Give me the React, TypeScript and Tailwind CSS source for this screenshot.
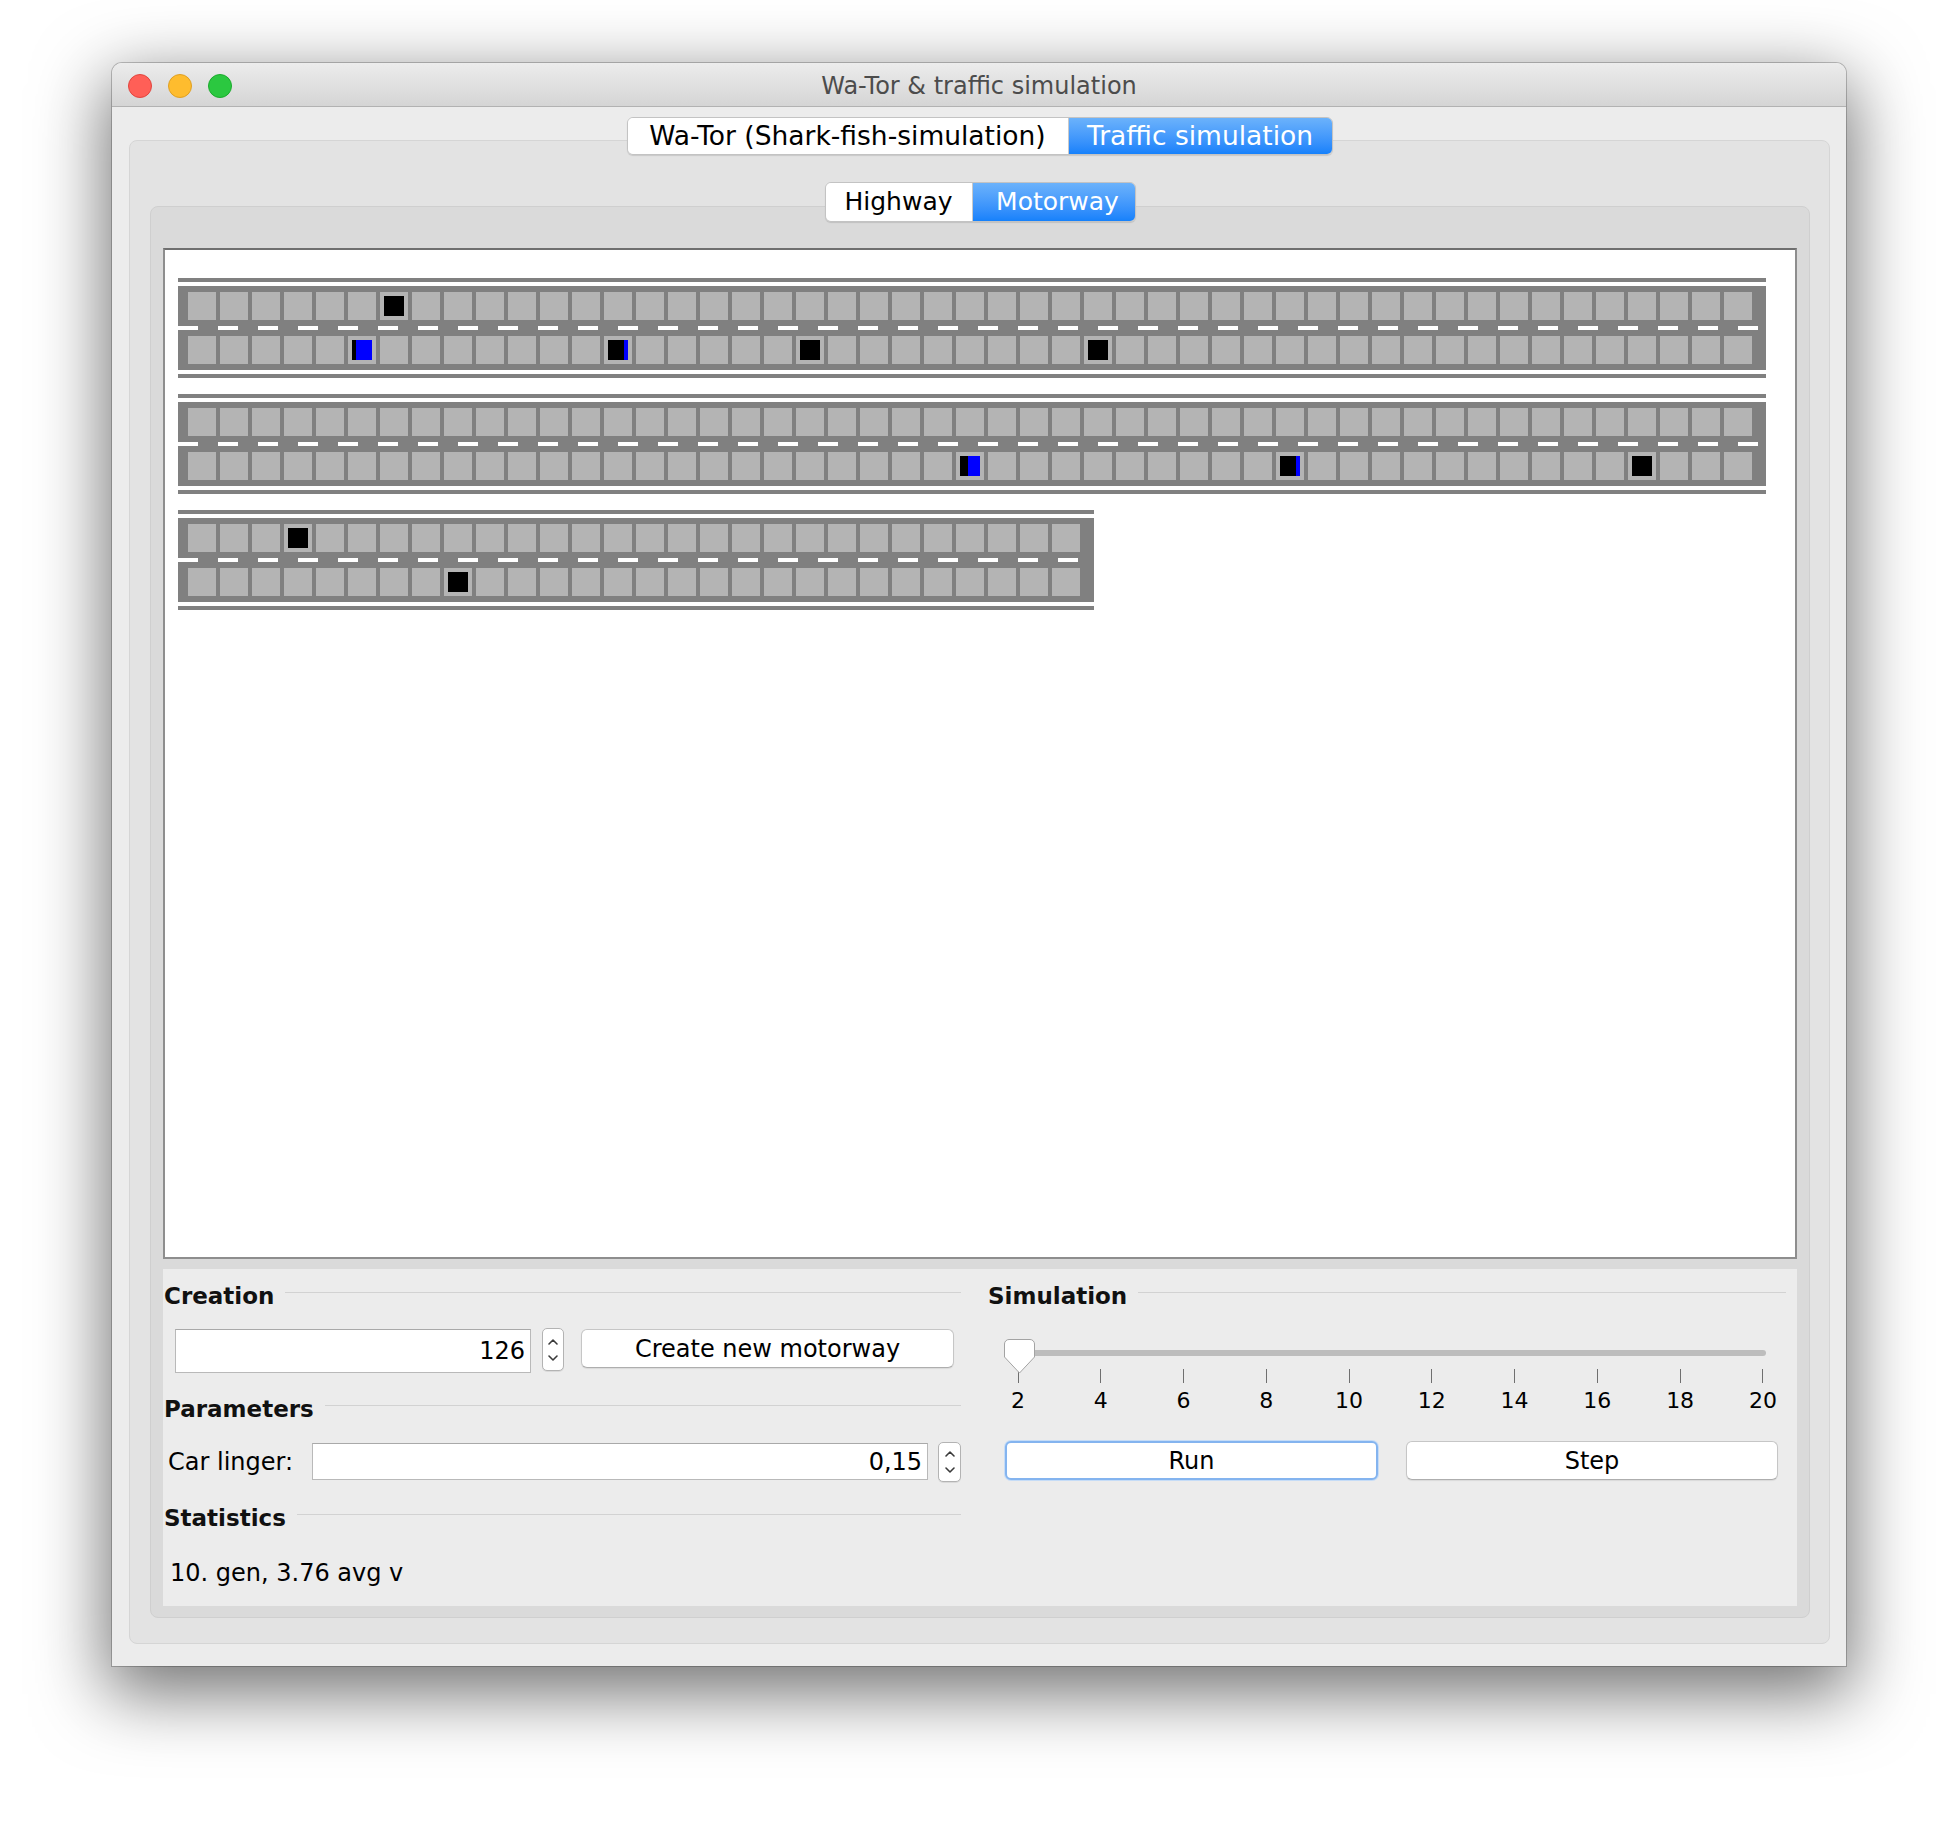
import type { ReactNode } from "react";

type Car = [number, number]; // [black px, blue px]
type Lane = Record<number, Car>;
type Road = { cells: number; lanes: [Lane, Lane] };

const roads: Road[] = [
  {
    cells: 49,
    lanes: [{ 6: [20, 0] }, { 5: [4, 16], 13: [16, 4], 19: [20, 0], 28: [20, 0] }],
  },
  {
    cells: 49,
    lanes: [{}, { 24: [8, 12], 34: [16, 4], 45: [20, 0] }],
  },
  {
    cells: 28,
    lanes: [{ 3: [20, 0] }, { 8: [20, 0] }],
  },
];

const ticks = [2, 4, 6, 8, 10, 12, 14, 16, 18, 20];

function LaneRow({ cells, cars }: { cells: number; cars: Lane }) {
  return (
    <div className="flex gap-1 pl-[10px] pr-[14px]">
      {Array.from({ length: cells }, (_, i) => {
        const car = cars[i];
        return (
          <div key={i} className="h-7 w-7 bg-[#b4b4b4] p-1">
            {car ? (
              <div className="flex h-5 w-5">
                <div className="h-5 bg-black" style={{ width: car[0] }} />
                <div className="h-5 bg-[#0000ff]" style={{ width: car[1] }} />
              </div>
            ) : null}
          </div>
        );
      })}
    </div>
  );
}

function RoadView({ road }: { road: Road }) {
  return (
    <div className="w-fit">
      <div className="h-1 bg-[#808080]" />
      <div className="mt-1 bg-[#808080] py-[6px]">
        <LaneRow cells={road.cells} cars={road.lanes[0]} />
        <div className="my-[6px] h-1 bg-[repeating-linear-gradient(90deg,#ffffff_0px,#ffffff_20px,transparent_20px,transparent_40px)]" />
        <LaneRow cells={road.cells} cars={road.lanes[1]} />
      </div>
      <div className="mt-1 h-1 bg-[#808080]" />
    </div>
  );
}

function Heading({ children }: { children: ReactNode }) {
  return (
    <div className="flex h-[28px] items-start">
      <span className="text-[23px] font-bold leading-[28px] text-[#111]">{children}</span>
      <div className="ml-[11px] mt-[10px] h-px flex-1 bg-[#d2d2d2]" />
    </div>
  );
}

function Spinner({ className }: { className: string }) {
  return (
    <div
      className={`flex items-center justify-center rounded-[5px] border border-[#b3b3b3] bg-white shadow-[0_1px_0_rgba(0,0,0,0.08)] ${className}`}
    >
      <svg width="20" height="26" viewBox="0 0 20 26" fill="none">
        <path d="M6 7 L10 3 L14 7" stroke="#3a3a3a" strokeWidth="1.6" strokeLinecap="round" strokeLinejoin="round" />
        <path d="M6 19 L10 23 L14 19" stroke="#3a3a3a" strokeWidth="1.6" strokeLinecap="round" strokeLinejoin="round" />
      </svg>
    </div>
  );
}

function Segments({
  items,
  height,
  size,
}: {
  items: { label: string; width: string; active?: boolean }[];
  height: string;
  size: string;
}) {
  return (
    <div className="flex overflow-hidden rounded-[6px] border border-[#c3c3c3] shadow-[0_1px_1px_rgba(0,0,0,0.12)]">
      {items.map((it) => (
        <div
          key={it.label}
          className={`flex items-center justify-center ${height} ${it.width} ${size} ${
            it.active
              ? "bg-linear-to-b from-[#6bb2fb] to-[#1581fb] text-white"
              : "border-r border-[#c9c9c9] bg-white text-black"
          }`}
        >
          {it.label}
        </div>
      ))}
    </div>
  );
}

export default function App() {
  return (
    <div className="flex h-[1826px] justify-center bg-white pt-[63px] font-['DejaVu_Sans',sans-serif]">
      <div className="flex h-[1603px] w-[1734px] flex-col overflow-hidden rounded-t-[10px] shadow-[0_0_0_1px_rgba(0,0,0,0.22),0_22px_70px_6px_rgba(0,0,0,0.55)]">
        {/* title bar */}
        <div className="grid h-[44px] grid-cols-[1fr_auto_1fr] items-center border-b border-[#b2b2b2] bg-linear-to-b from-[#ececec] to-[#d5d5d5] pt-[2px]">
          <div className="flex gap-4 pl-4">
            <div className="h-6 w-6 rounded-full border border-[#e1453e] bg-[#ff5f57]" />
            <div className="h-6 w-6 rounded-full border border-[#dfa023] bg-[#febc2e]" />
            <div className="h-6 w-6 rounded-full border border-[#1bab2d] bg-[#2bc840]" />
          </div>
          <div className="text-[24px] text-[#4c4c4c]">Wa-Tor &amp; traffic simulation</div>
          <div />
        </div>

        {/* window body */}
        <div className="flex flex-1 flex-col bg-[#ececec] pb-[22px] pl-[17px] pr-[16px] pt-[10px]">
          <div className="relative z-10 flex h-[38px] justify-center">
            <Segments
              height="h-[36px]"
              size="text-[26.5px]"
              items={[
                { label: "Wa-Tor (Shark-fish-simulation)", width: "w-[441px]" },
                { label: "Traffic simulation", width: "w-[263px]", active: true },
              ]}
            />
          </div>

          <div className="-mt-[15px] flex flex-1 flex-col rounded-[8px] border border-[#d5d5d5] bg-[#e3e3e3] pb-[25px] pl-[20px] pr-[19px] pt-[41px]">
            <div className="relative z-10 flex h-[40px] justify-center">
              <Segments
                height="h-[38px]"
                size="text-[25px]"
                items={[
                  { label: "Highway", width: "w-[147px]" },
                  { label: "Motorway", width: "w-[162px] pl-[8px]", active: true },
                ]}
              />
            </div>

            <div className="-mt-[16px] flex flex-1 flex-col rounded-[8px] border border-[#cfcfcf] bg-[#dadada] px-[12px] pb-[11px] pt-[41px]">
              {/* canvas */}
              <div className="flex h-[1011px] flex-col gap-4 border-2 border-[#8e8e8e] border-t-[#6f6f6f] bg-white pl-[13px] pt-[28px]">
                {roads.map((r, i) => (
                  <RoadView key={i} road={r} />
                ))}
              </div>

              {/* controls */}
              <div className="mt-[10px] grid flex-1 grid-cols-[797px_798px] gap-x-[27px] bg-[#ececec] pl-px pt-[13px] text-[24px] text-black">
                <div className="flex flex-col">
                  <Heading>Creation</Heading>
                  <div className="mt-[19px] flex items-start">
                    <div className="ml-[11px] flex h-[44px] w-[356px] items-center justify-end border border-[#b9b9b9] border-t-[#a9a9a9] bg-white pr-[5px]">
                      126
                    </div>
                    <Spinner className="-mt-px ml-[11px] h-[43px] w-[22px]" />
                    <button
                      type="button"
                      className="ml-[17px] flex h-[39px] w-[373px] items-center justify-center rounded-[6px] border border-[#c6c6c6] border-b-[#aeaeae] bg-white shadow-[0_1px_1px_rgba(0,0,0,0.08)]"
                    >
                      Create new motorway
                    </button>
                  </div>

                  <div className="mt-[22px]">
                    <Heading>Parameters</Heading>
                  </div>
                  <div className="mt-[20px] flex items-start">
                    <div className="flex h-[37px] w-[149px] items-center pl-[4px]">Car linger:</div>
                    <div className="flex h-[37px] w-[618px] items-center justify-end border border-[#b9b9b9] border-t-[#a9a9a9] bg-white pr-[5px]">
                      0,15
                    </div>
                    <Spinner className="-mt-px ml-[10px] h-[40px] w-[23px]" />
                  </div>

                  <div className="mt-[22px]">
                    <Heading>Statistics</Heading>
                  </div>
                  <div className="mt-[27px] pl-[6px] leading-[28px]">10. gen, 3.76 avg v</div>
                </div>

                <div className="flex flex-col">
                  <Heading>Simulation</Heading>
                  <div className="relative mt-[29px] h-[30px]">
                    <div className="ml-[18px] mt-[11px] h-[6px] w-[760px] rounded-full bg-[#bdbdbd]" />
                    <svg
                      className="absolute left-[16px] top-0"
                      width="31"
                      height="35"
                      viewBox="0 0 31 35"
                      fill="none"
                    >
                      <path
                        d="M5 0.5 H26 A4.5 4.5 0 0 1 30.5 5 V18 L15.5 34 L0.5 18 V5 A4.5 4.5 0 0 1 5 0.5 Z"
                        fill="#ffffff"
                        stroke="#a3a3a3"
                      />
                    </svg>
                  </div>
                  <div className="ml-[30px] flex w-[745px] justify-between">
                    {ticks.map((t) => (
                      <div key={t} className="flex w-0 flex-col items-center">
                        <div className="h-[14px] w-px shrink-0 bg-[#6f6f6f]" />
                        <div className="mt-[5px] text-[22px] leading-[26px]">{t}</div>
                      </div>
                    ))}
                  </div>
                  <div className="mt-[27px] flex">
                    <button
                      type="button"
                      className="ml-[17px] flex h-[39px] w-[373px] items-center justify-center rounded-[6px] border-2 border-[#84b4ef] bg-white shadow-[0_0_0_1px_#c5dcf7]"
                    >
                      Run
                    </button>
                    <button
                      type="button"
                      className="ml-[28px] flex h-[39px] w-[372px] items-center justify-center rounded-[6px] border border-[#c6c6c6] border-b-[#aeaeae] bg-white shadow-[0_1px_1px_rgba(0,0,0,0.08)]"
                    >
                      Step
                    </button>
                  </div>
                </div>
              </div>
            </div>
          </div>
        </div>
      </div>
    </div>
  );
}
